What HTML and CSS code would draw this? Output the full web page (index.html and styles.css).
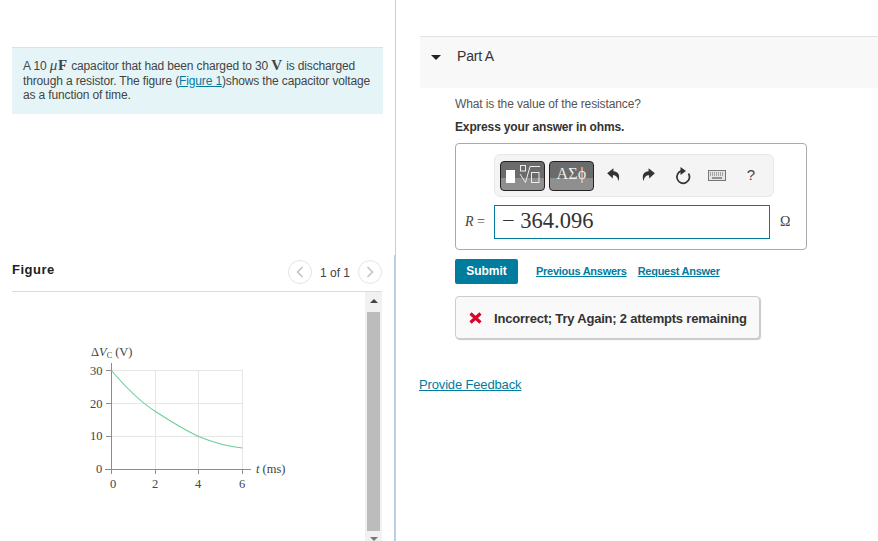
FILE: index.html
```html
<!DOCTYPE html>
<html lang="en">
<head>
<meta charset="utf-8">
<title>Part A</title>
<link rel="stylesheet" href="styles.css">
</head>
<body>
<div class="page">
  <section class="left">
    <div class="problem">
      <p>A 10 <span class="math"><i>μ</i><b>F</b></span> capacitor that had been charged to 30 <span class="math"><b>V</b></span> is discharged through a resistor. The figure (<a href="#">Figure 1</a>)shows the capacitor voltage as a function of time.</p>
    </div>
    <div class="figure">
      <div class="figure-head">
        <h2>Figure</h2>
        <div class="pager">
          <span class="circle"><svg width="8" height="12" viewBox="0 0 8 12"><path d="M6.500 1 1.500 6l5 5" fill="none" stroke="#c4c4c4" stroke-width="1.600"/></svg></span>
          <span class="count">1 of 1</span>
          <span class="circle"><svg width="8" height="12" viewBox="0 0 8 12"><path d="M1.500 1l5 5-5 5" fill="none" stroke="#c4c4c4" stroke-width="1.600"/></svg></span>
        </div>
      </div>
      <div class="figure-pane">
        <div class="figure-content">
          <svg class="graph" width="230" height="160" viewBox="0 0 230 160">
            <g stroke="#e6e6e6" stroke-width="1" fill="none">
              <path d="M41 35.500H172.500M41 68.500H172.500M41 101.500H172.500"/>
              <path d="M85.500 35V134M128.500 35V134M172.500 35V134"/>
            </g>
            <g stroke="#8d8d8d" stroke-width="1" fill="none">
              <path d="M41.500 28V139"/>
              <path d="M35 134.500H181"/>
              <path d="M36 35.500H41M36 68.500H41M36 101.500H41M85.500 134V139M128.500 134V139M172.500 134V139"/>
            </g>
            <path d="M41.500 35.500C58 55 72 68 85.500 76.500C100 86 115 95 128.500 101.500C142 107 158 111.500 172.500 113" fill="none" stroke="#6ccf9a" stroke-width="1.100"/>
            <g class="gt">
              <text x="21" y="21"><tspan>Δ</tspan><tspan font-style="italic">V</tspan><tspan font-size="8" dy="2">C</tspan><tspan dy="-2"> (V)</tspan></text>
              <text x="20" y="40">30</text>
              <text x="20" y="73">20</text>
              <text x="20" y="105">10</text>
              <text x="26" y="138">0</text>
              <text x="40" y="153">0</text>
              <text x="82" y="153">2</text>
              <text x="125" y="153">4</text>
              <text x="169" y="153">6</text>
              <text x="186" y="138"><tspan font-style="italic">t</tspan> (ms)</text>
            </g>
          </svg>
        </div>
        <div class="scrollbar">
          <span class="arrow-up"></span>
          <span class="thumb"></span>
          <span class="arrow-down"></span>
        </div>
      </div>
    </div>
  </section>

  <section class="right">
    <div class="part-head">
      <span class="caret"></span>
      <h3>Part A</h3>
    </div>
    <div class="part-body">
      <p class="question">What is the value of the resistance?</p>
      <p class="instruction">Express your answer in ohms.</p>
      <div class="answer">
        <div class="toolbar">
          <span class="tool-btn">
            <svg width="35" height="24" viewBox="0 0 35 24">
              <rect x="1" y="6" width="9" height="13" fill="#fff"/>
              <g fill="none" stroke="#ececec" stroke-width="1">
                <rect x="15.500" y="1.500" width="5" height="5.500"/>
                <path d="M15 10l5.500 8.500L25 2.500h10"/>
                <rect x="26.500" y="8.500" width="7.500" height="10"/>
              </g>
            </svg>
          </span>
          <span class="tool-btn greek">ΑΣϕ</span>
          <span class="icon-btn arrow-icon"><svg width="16" height="16" viewBox="0 0 14 14"><path d="M6.500 1 1 5.500l5 4.500V7.200c2.800 0 4.300 1.500 4.800 5.300C12.600 7.600 11 4 6.500 3.700z" fill="#333"/></svg></span>
          <span class="icon-btn arrow-icon"><svg width="16" height="16" viewBox="0 0 14 14"><path d="M7.500 1 13 5.500 8 10V7.200c-2.800 0-4.300 1.500-4.800 5.300C1.400 7.600 3 4 7.500 3.700z" fill="#333"/></svg></span>
          <span class="icon-btn"><svg width="16" height="18" viewBox="0 0 16 18"><path d="M13.500 6.500A6.300 6.300 0 1 1 6.500 3.900" fill="none" stroke="#333" stroke-width="1.700"/><path d="M5.500 0 11 4 5.500 8z" fill="#333"/></svg></span>
          <span class="icon-btn"><svg width="18" height="11" viewBox="0 0 18 11"><rect x=".5" y=".5" width="17" height="10" fill="#e4e4e4" stroke="#777"/><path d="M2 3h14M2 5h14" stroke="#666" stroke-dasharray="1 1"/><path d="M4 8h10" stroke="#666" stroke-width="1.300"/></svg></span>
          <span class="icon-btn help">?</span>
        </div>
        <div class="input-row">
          <span class="label"><i>R</i> =</span>
          <div class="input">− 364.096</div>
          <span class="unit">Ω</span>
        </div>
      </div>
      <div class="actions">
        <button class="submit" type="button">Submit</button>
        <a href="#" class="prev">Previous Answers</a>
        <a href="#" class="req">Request Answer</a>
      </div>
      <div class="feedback">
        <svg width="13" height="12" viewBox="0 0 13 12"><path d="M1.500 1.500l10 9M11.500 1.500l-10 9" stroke="#d9042b" stroke-width="3.200" fill="none"/></svg>
        <span>Incorrect; Try Again; 2 attempts remaining</span>
      </div>
    </div>
    <a href="#" class="provide">Provide Feedback</a>
  </section>
</div>
</body>
</html>
```
FILE: styles.css
```css
* { box-sizing: border-box; }
html, body { margin: 0; padding: 0; background: #fff; }
body { font-family: "Liberation Sans", Arial, sans-serif; color: #333; overflow: hidden; }
a { color: #007c9e; }
p, h2, h3 { margin: 0; }

.page { display: flex; width: 878px; height: 541px; overflow: hidden; }

.left { width: 396px; flex: none; height: 541px; padding: 47px 12px 0 12px; border-right: 1px solid #bcd0e2; display: flex; flex-direction: column; }

.problem { height: 67px; flex: none; background: #e5f5f7; border-top: 1px solid #d9e2e6; padding: 10px 10px 0 11px; font-size: 12px; line-height: 14.500px; color: #444; letter-spacing: -.14px; }
.math { font-family: "Liberation Serif", serif; font-size: 15px; line-height: 1; letter-spacing: .8px; }

.figure { flex: 1; min-height: 0; margin: 141px -12px 0 0; padding-right: 12px; border-right: 1px solid #bcd0e2; display: flex; flex-direction: column; }
.figure-head { display: flex; justify-content: space-between; height: 37px; align-items: flex-end; border-bottom: 1px solid #d9dcde; padding-bottom: 7px; flex: none; }
.figure-head h2 { font-size: 13px; font-weight: bold; color: #222; letter-spacing: .5px; margin-bottom: 7px; }
.pager { display: flex; align-items: center; font-size: 12px; color: #444; }
.circle { width: 24px; height: 24px; border: 1px solid #e4e4e4; border-radius: 50%; display: flex; align-items: center; justify-content: center; }
.count { margin: 1px 8px 0; }

.figure-pane { display: flex; flex: 1; min-height: 0; }
.figure-content { flex: 1; padding-top: 43px; padding-left: 58px; }
.graph { display: block; }
.gt text { font-family: "Liberation Serif", serif; font-size: 12.500px; fill: #444; }

.scrollbar { width: 17px; height: 249px; background: #f1f1f1; display: flex; flex-direction: column; align-items: center; flex: none; }
.arrow-up { width: 0; height: 0; border: 4px solid transparent; border-top: 0; border-bottom: 4px solid #444; margin-top: 7px; }
.thumb { width: 13px; height: 220px; background: #bcbcbc; margin-top: 9px; }
.arrow-down { width: 0; height: 0; border: 4px solid transparent; border-bottom: 0; border-top: 4px solid #777; margin-top: 6px; }

.right { flex: 1; padding: 36px 0 0 24px; min-width: 0; }
.part-head { height: 52px; background: #f8f8f8; border-top: 1px solid #e2e2e2; display: flex; padding: 11px 0 0 11px; }
.caret { width: 0; height: 0; border: 5px solid transparent; border-bottom: 0; border-top: 5px solid #222; margin-top: 7px; }
.part-head h3 { font-size: 14px; font-weight: normal; color: #333; margin-left: 16px; letter-spacing: -.2px; }

.part-body { padding: 9px 0 0 35px; }
.question { font-size: 12px; color: #555; line-height: 14px; letter-spacing: -.12px; }
.instruction { font-size: 12px; font-weight: bold; color: #333; line-height: 14px; margin-top: 9px; letter-spacing: -.15px; }

.answer { width: 352px; height: 107px; margin-top: 9px; border: 1px solid #aaa; border-radius: 4px; padding: 10px 0 0 38px; }
.toolbar { width: 280px; height: 43px; background: #f4f4f4; border: 1px solid #e8e8e8; border-radius: 6px; display: flex; align-items: center; padding: 0 5px; }
.tool-btn { width: 45px; height: 30px; border: 1px solid #222; border-radius: 4px; background: linear-gradient(#6b6b6b 0 57%, #8f8f8f 57% 100%); display: flex; align-items: center; justify-content: center; color: #eee; flex: none; }
.tool-btn.greek { font-family: "Liberation Serif", serif; font-size: 16px; margin-left: 4px; align-items: flex-start; padding-top: 3px; letter-spacing: .3px; }
.icon-btn { width: 34px; height: 30px; display: flex; align-items: center; justify-content: center; flex: none; }
.icon-btn:nth-child(3) { margin-left: 4px; }
.arrow-icon svg { margin: 0 2px 2px 0; }
.help { font-size: 15px; color: #444; padding-bottom: 3px; }

.input-row { display: flex; align-items: center; margin-top: 8px; margin-left: -29px; }
.label { width: 29px; font-family: "Liberation Serif", serif; font-size: 14px; color: #444; white-space: nowrap; }
.input { width: 276px; height: 34px; border: 1px solid #007c9e; padding-left: 7px; font-family: "Liberation Serif", serif; font-size: 22.500px; line-height: 30px; color: #333; }
.unit { margin: 0 0 1px 10px; font-family: "Liberation Serif", serif; font-size: 14px; color: #444; }

.actions { display: flex; align-items: center; margin-top: 9px; }
.submit { width: 63px; height: 25px; border: 0; border-radius: 2px; background: #007c9e; color: #fff; font: bold 12px "Liberation Sans", Arial, sans-serif; padding: 0 0 2px; }
.prev, .req { font-size: 11px; font-weight: bold; letter-spacing: -.27px; margin-bottom: 2px; }
.prev { margin-left: 18px; }
.req { margin-left: 11px; }

.feedback { width: 305px; height: 43px; margin-top: 12px; background: #f9f9f9; border: 1px solid #ccc; border-radius: 4px; box-shadow: 1px 1px 1px #c8c8c8; display: flex; align-items: center; padding-left: 13px; font-size: 13px; font-weight: bold; color: #333; letter-spacing: -.2px; }
.feedback span { margin: 1px 0 0 12px; white-space: nowrap; }
.provide { display: block; width: max-content; margin-top: 38px; margin-left: -1px; font-size: 13px; letter-spacing: -.15px; }
```
